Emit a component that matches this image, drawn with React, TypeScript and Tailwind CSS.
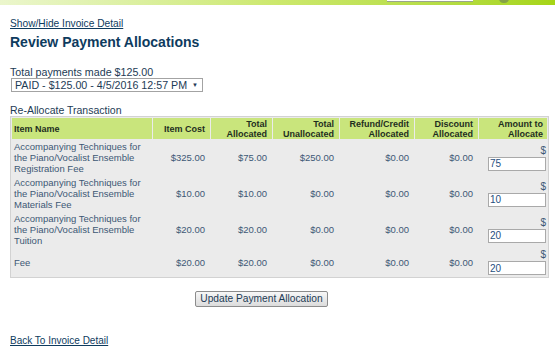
const rows = [
  { name: "Accompanying Techniques for the Piano/Vocalist Ensemble Registration Fee", cost: "$325.00", alloc: "$75.00", unalloc: "$250.00", amt: "75" },
  { name: "Accompanying Techniques for the Piano/Vocalist Ensemble Materials Fee", cost: "$10.00", alloc: "$10.00", unalloc: "$0.00", amt: "10" },
  { name: "Accompanying Techniques for the Piano/Vocalist Ensemble Tuition", cost: "$20.00", alloc: "$20.00", unalloc: "$0.00", amt: "20" },
  { name: "Fee", cost: "$20.00", alloc: "$20.00", unalloc: "$0.00", amt: "20" },
];

export default function App() {
  return (
    <div className="h-[352px] w-[555px] overflow-hidden bg-white font-['Liberation_Sans',Arial,sans-serif] text-[#1d3b55]">
      <div className="relative h-[5px] bg-gradient-to-r from-[#ebf6cc] via-[#cce86c] to-[#a6d514]">
        <div className="absolute left-[387px] top-0 h-[2px] w-[86px] border-b border-[#9aa58a] bg-white" />
        <div className="absolute left-[499px] top-[-6px] h-[9px] w-[10px] rounded-full bg-[#86a247]" />
      </div>

      <div className="px-[10px] pt-[13px]">
        <a href="#" className="block w-fit text-[10.2px] leading-[12px] text-[#0e3b5e] underline">Show/Hide Invoice Detail</a>
        <h1 className="mt-[4px] text-[14px] font-bold leading-[17px] text-[#0e3b5e]">Review Payment Allocations</h1>

        <div className="mt-[15px] text-[10.7px] leading-[12px] text-[#1d3b55]">Total payments made $125.00</div>
        <div className="ml-[1px] flex h-[14px] w-[192px] items-center justify-between whitespace-nowrap border border-[#a3a3a3] pl-[3px] pr-[4px] text-[10.7px] leading-[12px] text-[#1d3b55]">
          <span>PAID - $125.00 - 4/5/2016 12:57 PM</span>
          <span className="text-[6px]">▼</span>
        </div>

        <div className="mt-[12px] text-[10.5px] leading-[12px] text-[#1d3b55]">Re-Allocate Transaction</div>
        <table className="w-[539px] table-fixed border-separate border-spacing-[1px] border border-[#d2d2d2] bg-[#ebebeb]">
          <colgroup>
            <col className="w-[140px]" />
            <col className="w-[57px]" />
            <col className="w-[61px]" />
            <col className="w-[66px]" />
            <col className="w-[74px]" />
            <col className="w-[63px]" />
            <col className="w-[68px]" />
          </colgroup>
          <thead>
            <tr className="h-[21px] bg-[#c9e57c] text-[9px] font-bold leading-[10px] text-[#1f2e1f]">
              <th className="pl-[2px] text-left">Item Name</th>
              <th className="pr-[5px] text-right">Item Cost</th>
              <th className="pr-[5px] text-right">Total<br />Allocated</th>
              <th className="pr-[5px] text-right">Total<br />Unallocated</th>
              <th className="pr-[5px] text-right">Refund/Credit<br />Allocated</th>
              <th className="pr-[5px] text-right">Discount<br />Allocated</th>
              <th className="pr-[4px] text-right">Amount to<br />Allocate</th>
            </tr>
          </thead>
          <tbody className="text-[9.5px] leading-[11px] text-[#3d5875]">
            {rows.map((r) => (
              <tr key={r.name}>
                <td className="py-[1px] pl-[2px] pr-[4px] align-middle">{r.name}</td>
                <td className="pr-[5px] text-right">{r.cost}</td>
                <td className="pr-[5px] text-right">{r.alloc}</td>
                <td className="pr-[5px] text-right">{r.unalloc}</td>
                <td className="pr-[5px] text-right">$0.00</td>
                <td className="pr-[5px] text-right">$0.00</td>
                <td className="py-[1px] pr-[1px] text-right">
                  <div className="text-[10px] leading-[11px]">$</div>
                  <input
                    defaultValue={r.amt}
                    className="ml-auto mt-[1px] block h-[14px] w-[58px] border border-[#a9a9a9] bg-white px-[1px] text-left text-[10px] leading-[12px] text-[#1f4f80] outline-none"
                  />
                </td>
              </tr>
            ))}
          </tbody>
        </table>

        <div className="mt-[13px] flex pl-[185px]">
          <button className="h-[16px] w-[133px] rounded-[2px] border border-[#8c8c8c] bg-gradient-to-b from-[#f7f7f7] to-[#dcdcdc] text-[10.2px] leading-[12px] text-[#1d3b55]">
            Update Payment Allocation
          </button>
        </div>

        <a href="#" className="mt-[28px] block w-fit text-[10px] leading-[12px] text-[#0e3b5e] underline">Back To Invoice Detail</a>
      </div>
    </div>
  );
}
